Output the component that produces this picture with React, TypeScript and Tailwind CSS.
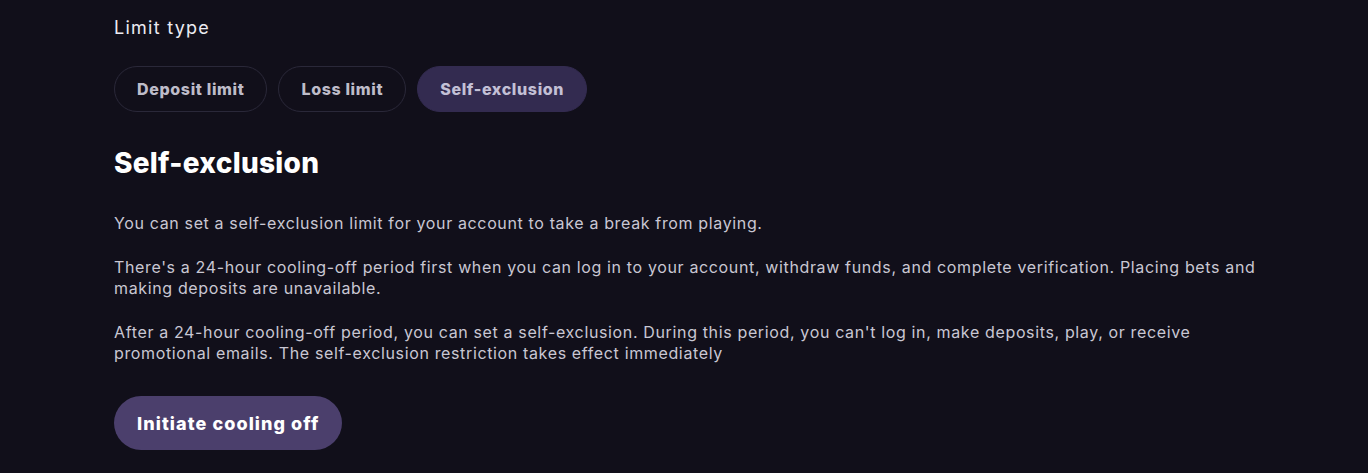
export default function App() {
  const tabs = ["Deposit limit", "Loss limit", "Self-exclusion"];
  const active = "Self-exclusion";

  return (
    <div
      className="min-h-[473px] bg-[#110f1a] pl-[114px] pt-[14px] text-[#c9c7d3]"
      style={{ fontFamily: "Inter, 'Noto Sans', sans-serif" }}
    >
      <div className="w-[1160px]">
        <p className="text-[18px] leading-[28px] tracking-[0.07em] text-[#ecebf2]">Limit type</p>

        {/* limit type tabs */}
        <div className="mt-[24px] flex gap-[11px]">
          {tabs.map((tab) => (
            <button
              key={tab}
              className={
                tab === active
                  ? "h-[46px] rounded-full border border-[#332b50] bg-[#332b50] px-[22px] text-[16px] font-extrabold tracking-[0.04em] text-[#c3c0d6]"
                  : "h-[46px] rounded-full border border-[#2a2839] bg-transparent px-[22px] text-[16px] font-extrabold tracking-[0.04em] text-[#bebcc9]"
              }
            >
              {tab}
            </button>
          ))}
        </div>

        <h2 className="mt-[32px] text-[28px] font-extrabold leading-[38px] tracking-[0.01em] text-white">
          Self-exclusion
        </h2>

        <div className="mt-[31px] flex flex-col gap-[23px] text-[16px] leading-[21px] tracking-[0.04em]">
          <p>You can set a self-exclusion limit for your account to take a break from playing.</p>
          <p>
            There's a 24-hour cooling-off period first when you can log in to your account, withdraw
            funds, and complete verification. Placing bets and making deposits are unavailable.
          </p>
          <p>
            After a 24-hour cooling-off period, you can set a self-exclusion. During this period, you
            can't log in, make deposits, play, or receive promotional emails. The self-exclusion
            restriction takes effect immediately
          </p>
        </div>

        <button className="mt-[32px] h-[54px] rounded-full bg-[#4b3f6c] px-[23px] text-[18px] font-extrabold tracking-[0.06em] text-white">
          Initiate cooling off
        </button>
      </div>
    </div>
  );
}
